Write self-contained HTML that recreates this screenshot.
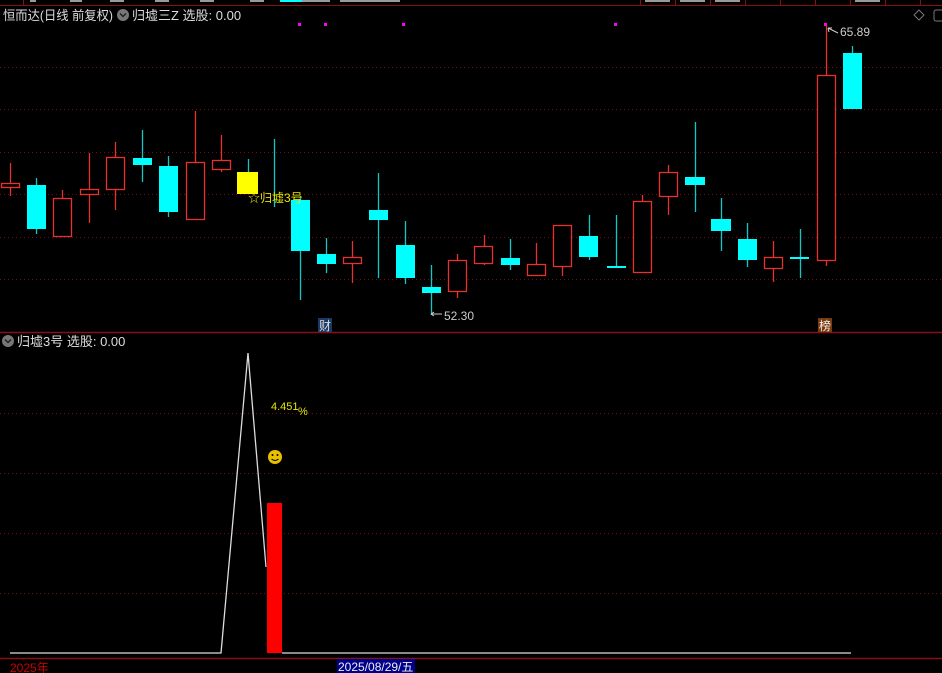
<!DOCTYPE html>
<html><head><meta charset="utf-8"><style>
html,body{margin:0;padding:0;background:#000;width:942px;height:673px;overflow:hidden}
svg{display:block}
text{font-family:"Liberation Sans","Noto Sans CJK SC",sans-serif}
</style></head><body>
<svg width="942" height="673" viewBox="0 0 942 673" xmlns="http://www.w3.org/2000/svg">
<rect width="942" height="673" fill="#000"/>
<line x1="0" y1="5.5" x2="942" y2="5.5" stroke="#8a0e12" stroke-width="1"/>
<g stroke="#8a0e12"><line x1="23.5" y1="0" x2="23.5" y2="5"/><line x1="640.5" y1="0" x2="640.5" y2="5"/><line x1="675.5" y1="0" x2="675.5" y2="5"/><line x1="710.5" y1="0" x2="710.5" y2="5"/><line x1="745.5" y1="0" x2="745.5" y2="5"/><line x1="780.5" y1="0" x2="780.5" y2="5"/><line x1="815.5" y1="0" x2="815.5" y2="5"/><line x1="850.5" y1="0" x2="850.5" y2="5"/><line x1="885.5" y1="0" x2="885.5" y2="5"/><line x1="920.5" y1="0" x2="920.5" y2="5"/></g>
<g fill="#999"><rect x="30" y="0" width="6" height="2"/><rect x="70" y="0" width="12" height="2"/><rect x="110" y="0" width="14" height="2"/><rect x="155" y="0" width="14" height="2"/><rect x="200" y="0" width="14" height="2"/><rect x="250" y="0" width="14" height="2"/><rect x="300" y="0" width="30" height="2"/><rect x="340" y="0" width="60" height="2"/><rect x="645" y="0" width="25" height="2"/><rect x="680" y="0" width="25" height="2"/><rect x="715" y="0" width="25" height="2"/><rect x="855" y="0" width="25" height="2"/></g>
<rect x="280" y="0" width="22" height="2" fill="#0ff"/>
<g stroke="#7a0a0a" stroke-dasharray="1 3">
<line x1="0" y1="67.5" x2="942" y2="67.5"/><line x1="0" y1="109.5" x2="942" y2="109.5"/><line x1="0" y1="152.5" x2="942" y2="152.5"/><line x1="0" y1="194.5" x2="942" y2="194.5"/><line x1="0" y1="237.5" x2="942" y2="237.5"/><line x1="0" y1="279.5" x2="942" y2="279.5"/>
<line x1="0" y1="413.5" x2="942" y2="413.5"/><line x1="0" y1="473.5" x2="942" y2="473.5"/><line x1="0" y1="533.5" x2="942" y2="533.5"/><line x1="0" y1="593.5" x2="942" y2="593.5"/>
</g>
<line x1="0" y1="332.5" x2="942" y2="332.5" stroke="#8a0e12" stroke-width="1.5"/>
<line x1="0" y1="658.5" x2="942" y2="658.5" stroke="#8a0e12" stroke-width="1.5"/>
<g fill="#f0f"><rect x="298" y="23" width="3" height="3"/><rect x="324" y="23" width="3" height="3"/><rect x="402" y="23" width="3" height="3"/><rect x="614" y="23" width="3" height="3"/><rect x="824" y="23" width="3" height="3"/></g>
<g stroke="#e8312f" stroke-width="1.3" fill="none">
<line x1="10.5" y1="163" x2="10.5" y2="196"/><rect x="1.5" y="183.5" width="18" height="4" fill="#000"/>
<line x1="62.5" y1="190" x2="62.5" y2="198"/><rect x="53.5" y="198.5" width="18" height="38" fill="#000"/>
<line x1="89.5" y1="153" x2="89.5" y2="223"/><rect x="80.5" y="189.5" width="18" height="5" fill="#000"/>
<line x1="115.5" y1="142" x2="115.5" y2="210"/><rect x="106.5" y="157.5" width="18" height="32" fill="#000"/>
<line x1="195.5" y1="111" x2="195.5" y2="162"/><rect x="186.5" y="162.5" width="18" height="57" fill="#000"/>
<line x1="221.5" y1="135" x2="221.5" y2="172"/><rect x="212.5" y="160.5" width="18" height="9" fill="#000"/>
<line x1="352.5" y1="241" x2="352.5" y2="283"/><rect x="343.5" y="257.5" width="18" height="6" fill="#000"/>
<line x1="457.5" y1="254" x2="457.5" y2="298"/><rect x="448.5" y="260.5" width="18" height="31" fill="#000"/>
<line x1="484.5" y1="235" x2="484.5" y2="265"/><rect x="474.5" y="246.5" width="18" height="17" fill="#000"/>
<line x1="536.5" y1="243" x2="536.5" y2="276"/><rect x="527.5" y="264.5" width="18" height="11" fill="#000"/>
<line x1="562.5" y1="225" x2="562.5" y2="276"/><rect x="553.5" y="225.5" width="18" height="41" fill="#000"/>
<line x1="642.5" y1="195" x2="642.5" y2="272"/><rect x="633.5" y="201.5" width="18" height="71" fill="#000"/>
<line x1="668.5" y1="165" x2="668.5" y2="215"/><rect x="659.5" y="172.5" width="18" height="24" fill="#000"/>
<line x1="773.5" y1="241" x2="773.5" y2="282"/><rect x="764.5" y="257.5" width="18" height="11" fill="#000"/>
<line x1="826.5" y1="25" x2="826.5" y2="266"/><rect x="817.5" y="75.5" width="18" height="185" fill="#000"/>
</g>
<g stroke="#13c6c6" stroke-width="1.3">
<line x1="36.5" y1="178" x2="36.5" y2="234"/>
<line x1="142.5" y1="130" x2="142.5" y2="182"/>
<line x1="168.5" y1="156" x2="168.5" y2="217"/>
<line x1="274.5" y1="139" x2="274.5" y2="207"/>
<line x1="300.5" y1="196" x2="300.5" y2="300"/>
<line x1="326.5" y1="238" x2="326.5" y2="273"/>
<line x1="378.5" y1="173" x2="378.5" y2="278"/>
<line x1="405.5" y1="221" x2="405.5" y2="284"/>
<line x1="431.5" y1="265" x2="431.5" y2="315"/>
<line x1="510.5" y1="239" x2="510.5" y2="270"/>
<line x1="589.5" y1="215" x2="589.5" y2="260"/>
<line x1="616.5" y1="215" x2="616.5" y2="268"/>
<line x1="695.5" y1="122" x2="695.5" y2="212"/>
<line x1="721.5" y1="198" x2="721.5" y2="251"/>
<line x1="747.5" y1="223" x2="747.5" y2="267"/>
<line x1="800.5" y1="229" x2="800.5" y2="278"/>
<line x1="852.5" y1="46" x2="852.5" y2="53"/>
</g>
<g fill="#00ffff">
<rect x="27" y="185" width="19" height="44"/>
<rect x="133" y="158" width="19" height="7"/>
<rect x="159" y="166" width="19" height="46"/>
<rect x="291" y="200" width="19" height="51"/>
<rect x="317" y="254" width="19" height="10"/>
<rect x="369" y="210" width="19" height="10"/>
<rect x="396" y="245" width="19" height="33"/>
<rect x="422" y="287" width="19" height="6"/>
<rect x="501" y="258" width="19" height="7"/>
<rect x="579" y="236" width="19" height="21"/>
<rect x="607" y="266" width="19" height="2"/>
<rect x="685" y="177" width="20" height="8"/>
<rect x="711" y="219" width="20" height="12"/>
<rect x="738" y="239" width="19" height="21"/>
<rect x="790" y="257" width="19" height="2"/>
<rect x="843" y="53" width="19" height="56"/>
</g>
<line x1="248.5" y1="159" x2="248.5" y2="172" stroke="#13c6c6" stroke-width="1.3"/>
<rect x="237" y="172" width="21" height="22" fill="#ffff00"/>
<text x="248" y="202" font-size="12" fill="#e6e600">☆归墟3号</text>
<path d="M431 314 L442 314 M431 314 L434 312 M431 314 L434 316" stroke="#ccc" fill="none"/>
<text x="444" y="320" font-size="12" fill="#ccc">52.30</text>
<path d="M828 28 L838 33 M828 28 L829 32 M828 28 L832 28" stroke="#ccc" fill="none"/>
<text x="840" y="36" font-size="12" fill="#ccc">65.89</text>
<rect x="318" y="318" width="14" height="14" fill="#1a3a66"/>
<text x="319" y="330" font-size="12" fill="#ddd">财</text>
<rect x="818" y="318" width="14" height="14" fill="#7a3a10"/>
<text x="819" y="330" font-size="12" fill="#eee">榜</text>
<text x="3" y="20" font-size="13" fill="#ddd" textLength="110" lengthAdjust="spacingAndGlyphs">恒而达(日线 前复权)</text>
<circle cx="123" cy="15" r="6" fill="#777"/><path d="M120 13.5 L123 16.5 L126 13.5" stroke="#222" stroke-width="1.5" fill="none"/>
<text x="132" y="20" font-size="13" fill="#ddd">归墟三Z 选股: 0.00</text>
<path d="M919 10 L924 15 L919 20 L914 15 Z" stroke="#777" fill="none"/>
<rect x="934" y="10" width="10" height="11" rx="2" stroke="#777" fill="none"/>
<circle cx="8" cy="341" r="6" fill="#777"/><path d="M5 339.5 L8 342.5 L11 339.5" stroke="#222" stroke-width="1.5" fill="none"/>
<text x="17" y="346" font-size="13" fill="#ddd">归墟3号 选股: 0.00</text>
<polyline points="10,653 221,653 248,353 266,567" stroke="#ddd" stroke-width="1.3" fill="none"/>
<line x1="282" y1="653" x2="851" y2="653" stroke="#ddd" stroke-width="1.3"/>
<rect x="267" y="503" width="15" height="150" fill="#ff0000"/>
<text x="271" y="410" font-size="11" fill="#e6e600">4.451</text>
<text x="298" y="415" font-size="11" fill="#e6e600">%</text>
<circle cx="275" cy="457" r="7" fill="#e8c000"/><circle cx="272.5" cy="455" r="1" fill="#000"/><circle cx="277.5" cy="455" r="1" fill="#000"/><path d="M271.5 459 Q275 462 278.5 459" stroke="#000" fill="none"/>
<text x="10" y="672" font-size="12" fill="#c00">2025年</text>
<rect x="337" y="659" width="78" height="14" fill="#00008a"/>
<text x="338" y="671" font-size="12" fill="#eee">2025/08/29/五</text>
</svg>
</body></html>
